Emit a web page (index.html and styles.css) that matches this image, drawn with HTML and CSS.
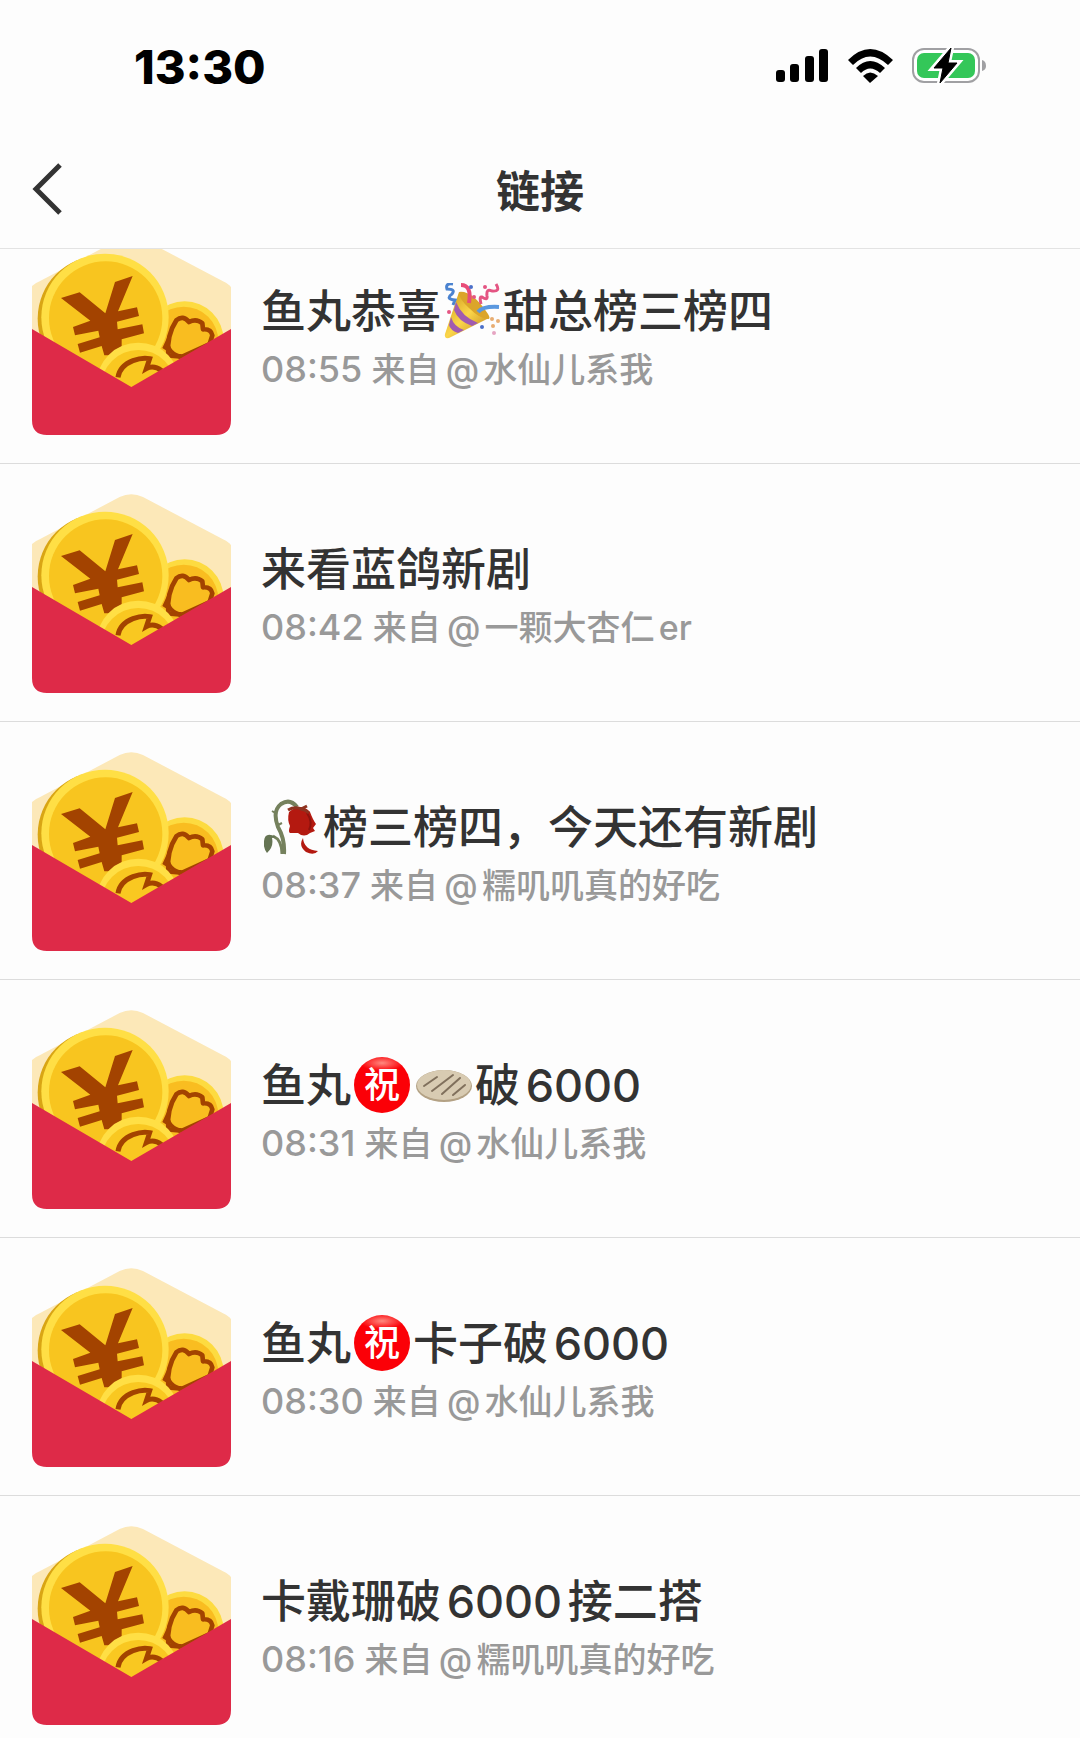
FILE: index.html
```
<!DOCTYPE html>
<html lang="zh-CN">
<head>
  <meta charset="UTF-8">
  <meta name="viewport" content="width=device-width, initial-scale=1.0">
  <title>链接</title>
  <link rel="stylesheet" href="styles.css">
</head>
<body>
  <!-- Shared drawings -->
  <svg class="symbols" aria-hidden="true">
    <symbol id="envelope" viewBox="37 42 597 597">
      <path d="M37 192 Q45 184 60 178 L300 51 Q335 34 370 51 L610 178 Q630 188 634 196 V400 H37Z" fill="#fce8b8"/>
      <circle cx="495" cy="355" r="117" fill="#fddb40"/>
      <circle cx="492" cy="358" r="104" fill="#f9bd20"/>
      <path d="M446 400 Q440 340 470 295 Q490 278 508 300 Q530 288 548 304 L550 322 Q574 320 578 340 L570 366 L488 404Z" fill="#f9bd20" stroke="#a34300" stroke-width="14" stroke-linejoin="round"/>
      <path d="M428 378 L450 330 Q440 390 486 398 L480 412Z" fill="#a34300"/>
      <circle cx="243" cy="290" r="189" fill="#d9a514"/>
      <circle cx="256" cy="286" r="191" fill="#ffdf45"/>
      <circle cx="258" cy="288" r="170" fill="#f8c51f"/>
      <path d="M124 228 L180 211 L257 274 L286 180 L339 162 L295 268 L352 256 L358 282 L292 299 L294 322 L368 307 L373 334 L306 352 L306 400 L254 400 L246 372 L181 392 L174 366 L240 346 L236 326 L166 340 L160 315 L212 296Z" fill="#a34300"/>
      <circle cx="356" cy="488" r="126" fill="#ffdf45"/>
      <circle cx="356" cy="496" r="112" fill="#f9c821"/>
      <path d="M295 466 Q300 432 340 416 Q368 405 390 410 L380 440 Q402 428 426 446" fill="none" stroke="#a34300" stroke-width="15"/>
      <path d="M37 321 L335 495 L634 321 V594 Q634 639 589 639 H82 Q37 639 37 594Z" fill="#de2a48"/>
    </symbol>
  </svg>

  <!-- Status bar -->
  <div class="status-bar">
    <span class="clock">13:30</span>
    <div class="status-icons">
      <svg width="54" height="36" viewBox="0 0 54 36">
        <rect x="0" y="22" width="9" height="12" rx="3"/>
        <rect x="14" y="16" width="9" height="18" rx="3"/>
        <rect x="29" y="8" width="9" height="26" rx="3"/>
        <rect x="43" y="1" width="9" height="33" rx="3"/>
      </svg>
      <svg width="46" height="36" viewBox="0 0 46 36">
        <path d="M0 12 Q22 -10 45 12 L40 17 Q22 0 5 17Z"/>
        <path d="M8 20 Q22 6 37 20 L32 25 Q22 16 13 25Z"/>
        <path d="M15 28 Q22 21 30 28 L22 35Z"/>
      </svg>
      <svg width="74" height="38" viewBox="0 0 74 38">
        <rect x="1" y="2" width="66" height="33" rx="11" fill="#fff" stroke="#a0a0a3" stroke-width="2"/>
        <rect x="5" y="6" width="58" height="25" rx="7" fill="#34c759"/>
        <path d="M70 13 Q74 14 74 19 Q74 23 70 24Z" fill="#a0a0a3"/>
        <path d="M39 1 L22 21 H31 L28 36 L45 16 H36Z" stroke="#fff" stroke-width="6"/>
        <path d="M39 1 L22 21 H31 L28 36 L45 16 H36Z" stroke="#000" stroke-linejoin="round"/>
      </svg>
    </div>
  </div>

  <!-- Title bar -->
  <header class="nav-bar">
    <button class="back" aria-label="返回">
      <svg width="30" height="52" viewBox="0 0 30 52">
        <path d="M28 2 L4 26 L28 50" fill="none" stroke="#333" stroke-width="5"/>
      </svg>
    </button>
    <h1>链接</h1>
  </header>

  <!-- Link list -->
  <main class="link-list">
    <a class="link-row" href="#">
      <svg class="cover"><use href="#envelope"/></svg>
      <div class="info">
        <h2>鱼丸恭喜<svg class="emoji" viewBox="0 0 56 56" role="img" aria-label="🎉">
          <defs>
            <linearGradient id="cone" x1="0" y1="0" x2="1" y2="1">
              <stop offset="0" stop-color="#c99418"/>
              <stop offset=".5" stop-color="#fbd64a"/>
              <stop offset="1" stop-color="#b97c16"/>
            </linearGradient>
          </defs>
          <path d="M15 9 L45 35 L5 55 Q0 56 1 51Z" fill="url(#cone)"/>
          <path d="M12 19 Q18 34 34 40 L28 43 Q14 38 10 27Z M7 34 Q10 44 20 47 L14 50 Q6 47 5 42Z" fill="#a05bb0"/>
          <path d="M15 9 Q28 7 44 31 Q47 36 44 36 Q36 36 25 25 Q15 16 15 9Z" fill="#dba52a"/>
          <path d="M17 2 Q28 2 25 20" fill="none" stroke="#e84d78" stroke-width="4"/>
          <path d="M9 1 Q1 0 3 6 Q12 6 8 11 Q1 16 11 17 L9 22" fill="none" stroke="#4b83d0" stroke-width="3"/>
          <path d="M34 29 Q39 23 55 24" fill="none" stroke="#5b98df" stroke-width="4"/>
          <path d="M52 1 Q57 9 48 8 Q42 5 43 13 Q44 18 38 14 Q35 13 37 21" fill="none" stroke="#e45583" stroke-width="3"/>
          <g fill="#e45583"><circle cx="41" cy="4" r="2"/><circle cx="5" cy="29" r="2"/><circle cx="30" cy="14" r="2"/></g>
          <g fill="#4b70c9"><circle cx="27" cy="4" r="2"/><circle cx="38" cy="44" r="2"/></g>
          <g fill="#e8ad72"><circle cx="48" cy="36" r="2"/><circle cx="54" cy="38" r="2"/><circle cx="49" cy="43" r="2"/></g>
          <circle cx="50" cy="50" r="2" fill="#e6a5c2"/>
        </svg>甜总榜三榜四</h2>
        <p><time>08:55</time> 来自<span class="author">@水仙儿系我</span></p>
      </div>
    </a>
    <a class="link-row" href="#">
      <svg class="cover"><use href="#envelope"/></svg>
      <div class="info">
        <h2>来看蓝鸽新剧</h2>
        <p><time>08:42</time> 来自<span class="author">@一颗大杏仁er</span></p>
      </div>
    </a>
    <a class="link-row" href="#">
      <svg class="cover"><use href="#envelope"/></svg>
      <div class="info">
        <h2><svg class="emoji" viewBox="0 0 56 56" role="img" aria-label="🥀">
          <path d="M20 55 Q21 40 14 28 Q8 12 17 5 Q26 -1 33 8" fill="none" stroke="#75815d" stroke-width="4"/>
          <path d="M18 55 Q18 41 9 37" fill="none" stroke="#75815d" stroke-width="3"/>
          <path d="M12 38 Q1 32 0 42 Q-1 49 3 54 Q10 48 8 39Z" fill="#657453"/>
          <path d="M8 12 L13 15 M18 24 L14 26" stroke="#75815d" stroke-width="2"/>
          <path d="M25 13 Q37 3 46 13 Q49 21 52 25 L49 29 L51 32 L46 34 Q40 39 34 34 L26 34 Q24 33 26 27 Q23 21 25 13Z" fill="#b41910"/>
          <path d="M43 14 Q49 23 45 31" fill="none" stroke="#8e120d" stroke-width="2"/>
          <path d="M24 11 Q31 7 37 10 L43 7 M37 10 Q42 11 45 14" fill="none" stroke="#8e3320" stroke-width="3"/>
          <path d="M39 39 Q40 51 54 52 Q50 57 42 53 Q34 47 39 39Z" fill="#b41910"/>
        </svg>榜三榜四，今天还有新剧</h2>
        <p><time>08:37</time> 来自<span class="author">@糯叽叽真的好吃</span></p>
      </div>
    </a>
    <a class="link-row" href="#">
      <svg class="cover"><use href="#envelope"/></svg>
      <div class="info">
        <h2>鱼丸<span class="emoji zhu">祝</span><svg class="emoji" viewBox="0 0 56 56" role="img" aria-label="🫓">
          <ellipse cx="28" cy="29" rx="28" ry="16" fill="#b3a184"/>
          <ellipse cx="28" cy="28" rx="27" ry="15" fill="#d8cbb2"/>
          <path d="M8 29 L21 20 M16 34 L37 18 M26 37 L44 21 M37 38 L49 28" stroke="#80705c" stroke-width="2" stroke-linecap="round"/>
        </svg>破6000</h2>
        <p><time>08:31</time> 来自<span class="author">@水仙儿系我</span></p>
      </div>
    </a>
    <a class="link-row" href="#">
      <svg class="cover"><use href="#envelope"/></svg>
      <div class="info">
        <h2>鱼丸<span class="emoji zhu">祝</span>卡子破6000</h2>
        <p><time>08:30</time> 来自<span class="author">@水仙儿系我</span></p>
      </div>
    </a>
    <a class="link-row" href="#">
      <svg class="cover"><use href="#envelope"/></svg>
      <div class="info">
        <h2>卡戴珊破6000接二搭</h2>
        <p><time>08:16</time> 来自<span class="author">@糯叽叽真的好吃</span></p>
      </div>
    </a>
  </main>
</body>
</html>
```
FILE: styles.css
```
* {
  box-sizing: border-box;
}

/* General styling */
body {
  margin: 0;
  height: 100vh;
  overflow: hidden;
  display: flex;
  flex-direction: column;
  background-color: #fdfdfd;
  color: #333;
  font-family: Inter, "Noto Sans CJK SC", sans-serif;
  text-autospace: normal;
}

.symbols {
  position: absolute;
  width: 0;
  height: 0;
}

/* Status bar */
.status-bar {
  flex: none;
  display: flex;
  justify-content: space-between;
  align-items: center;
  height: 132px;
  padding: 0 94px 0 134px;
  color: #000;
}

.clock {
  font-size: 47px;
  font-weight: 800;
}

.status-icons {
  display: flex;
  align-items: center;
  gap: 18px;
}

/* Title bar */
.nav-bar {
  flex: none;
  display: grid;
  grid-template-columns: 1fr auto 1fr;
  align-items: center;
  height: 117px;
  padding: 0 32px 2px;
  border-bottom: 1px solid #e3e3e3;
}

.back {
  justify-self: start;
  display: flex;
  padding: 0;
  border: none;
  background: none;
  cursor: pointer;
}

h1 {
  margin: 0;
  font-size: 44px;
  font-weight: 700;
}

/* List, scrolled partway down */
.link-list {
  flex: 1;
  min-height: 0;
  overflow: hidden;
  display: flex;
  flex-direction: column;
}

.link-row {
  flex: none;
  display: flex;
  align-items: center;
  gap: 30px;
  padding: 30px 32px 28px;
  border-bottom: 1px solid #dcdcdc;
  color: inherit;
  text-decoration: none;
}

.link-row:first-child {
  margin-top: -43px;
}

.cover {
  flex: none;
  width: 199px;
  height: 199px;
}

.info {
  min-width: 0;
  padding-top: 4px;
}

h2 {
  margin: 0;
  font-size: 45px;
  font-weight: 500;
  line-height: 64px;
  white-space: nowrap;
}

p {
  margin: 0;
  color: #999;
  font-size: 34px;
  font-weight: 500;
  line-height: 50px;
  white-space: nowrap;
}

time {
  font-size: 36px;
}

.author {
  margin-left: 2px;
}

/* Emoji drawn inside titles */
.emoji {
  display: inline-block;
  width: 56px;
  height: 56px;
  margin: 0 3px;
  vertical-align: -11px;
}

.zhu {
  overflow: hidden;
  border-radius: 50%;
  background: radial-gradient(ellipse 22px 8px at 50% 6px, #ff8a80, #fb0007);
  color: #fff;
  font-size: 36px;
  line-height: 56px;
  text-align: center;
  vertical-align: -11px;
}
```
